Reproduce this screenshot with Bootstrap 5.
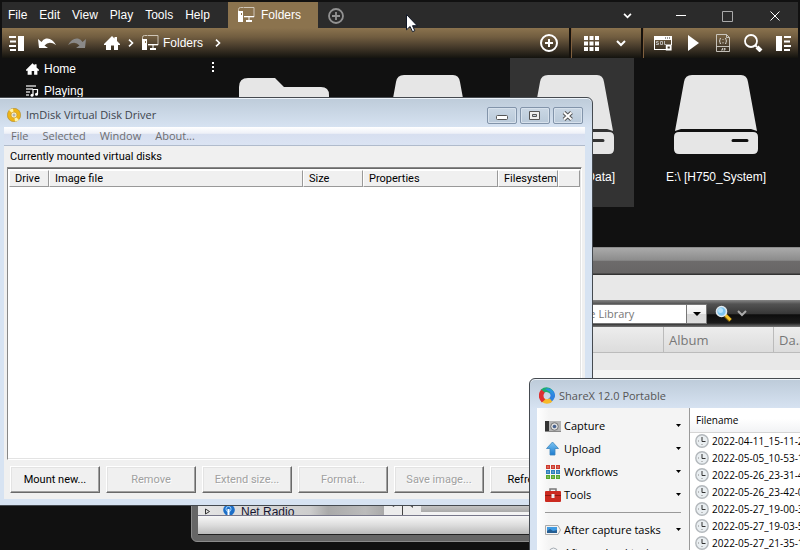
<!DOCTYPE html>
<html lang="en">
<head>
<meta charset="utf-8">
<meta name="viewport" content="width=device-width, initial-scale=1">
<title>Desktop</title>
<link href="https://cdn.jsdelivr.net/npm/bootstrap@5.3.0/dist/css/bootstrap.min.css" rel="stylesheet">
<style>
body{font:12px/16px "Liberation Sans",Arial,sans-serif;background:#111;color:#fff;height:100vh;overflow:hidden}
svg{display:block;flex:none}
a{color:inherit;text-decoration:none}
.btn{--bs-btn-padding-x:0;--bs-btn-padding-y:0;--bs-btn-border-width:0;--bs-btn-border-radius:0;font:inherit;color:inherit;line-height:16px}
.desktop{position:relative;height:100vh;overflow:hidden}
.win{position:absolute}
/* file manager */
.fm{inset:0;background:#111;padding:2px}
.fm-top{height:26px;background:#2b2b2b}
.fm-menu{width:226px;padding-left:6px;gap:12px}
.fm-tab{width:90px;background:#8b734e;padding-left:10px;gap:6px}
.fm-add{margin-left:10px;padding-top:2px}
.fm-tools{height:30px;background:linear-gradient(#8b734e,#715d40 30%,#433829 65%,#14130f)}
.cap{width:47px;height:26px;padding-top:2px}
.cap-first{margin-right:6px}
.tool{width:30px;height:30px}
.tool-add{margin-right:5px}
.tool-group{padding-left:5px;border-left:2px solid #15110c;box-shadow:inset 1px 0 #80603f}
.tool-view{padding-right:5px}
.fm-side{width:220px;padding-left:24px}
.fm-side a{height:22px;gap:5px}
.fm-more{margin-right:7px}
.tiles{gap:20px}
.tile{width:124px;height:149px;padding-top:17px}
.tile.sel{background:#333}
.tile-name{padding-top:14px}
/* music player */
.mp{left:191px;right:-8px;top:247px;bottom:8px;background:#666;border:1px solid #8c8c8c;border-radius:6px;padding:0 6px 6px;color:#777;overflow:hidden}
.mp-title{height:27px;margin:0 -6px;background:linear-gradient(#aaa,#8c8c8c 45%,#6d6b6b 50%,#676565 92%,#333 97%);}
.mp-strip{height:25px;background:#e8e8e8}
.mp-bar{height:27px;background:linear-gradient(#858585,#525252 15%,#383838 50%,#0d0d0d 55%,#1b1b1b 85%,#777);padding-left:259px}
.mp-search{width:250px;height:20px;background:#fff;border:1px solid #777}
.mp-search input{border:0;padding:0 0 0 83px;width:228px;background:#fff;color:#777;font:11px/16px "Open Sans",sans-serif;outline:0}
.mp-search input::placeholder{color:#777;opacity:1}
.mp-search .btn{width:20px;background:linear-gradient(#fcfcfc,#f0f0f0 50%,#d8d8d8 52%,#ddd);border-left:1px solid #777;height:18px}
.mp-opt{color:#aaa}
.mp-head{height:26px;background:linear-gradient(#ededed,#dcdcdc);border-bottom:1px solid #bbb;font:13px/26px "Open Sans",sans-serif;padding-left:465px}
.mp-head div{width:110px;border-left:1px solid #bbb;padding-left:5px}
.mp-body{background:linear-gradient(#e8e8e8 17px,#f4f4f4 17px);border-bottom:1px solid #77778a}
.mp-nav{width:186px;height:11px;background:linear-gradient(90deg,#e5e5e5,#cdcdcd 60%,#aaa 70%,#bbb 90%,#a9a9a9);color:#151530;font:12px/17px "Liberation Sans",sans-serif;padding-left:6px;gap:6px;overflow:hidden}
.mp-thumb{height:8px;margin-bottom:3px;background:linear-gradient(#ccc,#aaa)}
.mp-status{height:19px;background:linear-gradient(#f7f7f7,#ddd 50%,#bbb);border-bottom:1px solid #222}
/* disk driver */
.aero{background:linear-gradient(#bdcbd9,#d7e3f2 30px);border:1px solid #454a50;box-shadow:inset 0 1px #eef4fa;font-size:11px;color:#000}
.seg{font-family:"Open Sans",sans-serif;font-size:11px}
.im{left:-1px;right:207px;top:97px;padding:0 7px 6px 4px;border-radius:0 6px 0 0;font-family:Roboto,sans-serif}
.im-title{height:29px;padding:9px 2px 0 3px;gap:5px;color:#3d454d}
.im-title>svg{margin-top:1px}
.im-caps{gap:3px}
.im-caps .btn{width:30px;height:17px;border:1px solid #8294aa;border-radius:2px;background:linear-gradient(#cad7e4,#b9c9d9);box-shadow:inset 0 0 0 1px #d7e1ec}
.im-menu{height:19px;background:linear-gradient(#fff,#eef1f8 35%,#d7dff0 40%,#dbe4f3);border-bottom:1px solid #b0bbcc;color:#6d6d70;padding-left:7px;gap:14px}
.im-client{background:#f0f0f0;padding:3px 3px 6px}
.im-label{padding:0 3px 2px}
.im-list{border:1px solid;border-color:#888 #fff #fff #888;box-shadow:inset 0 1px #696969,inset -1px -1px #e3e3e3;background:#fff;height:293px;padding:1px;padding-top:2px}
.im-list table{width:100%;table-layout:fixed;border-collapse:separate;border-spacing:0}
.im-list th{height:17px;padding:0 0 0 5px;font-weight:400;line-height:14px;background:#f0f0f0;border:1px solid;border-color:#fff #999 #999 #fff;white-space:nowrap}
.c1{width:40px}.c3{width:60px}.c4{width:135px}.c5{width:60px}.c6{width:22px}
.im-btns{gap:6px;padding:6px 2px 0 3px}
.im-btns .btn{flex:1 1 0;height:27px;border:1px solid;border-color:#fff #696969 #696969 #fff;box-shadow:inset -1px -1px #a0a0a0,inset 1px 1px #e3e3e3;background:#f0f0f0;line-height:24px;white-space:nowrap}
.im-btns .btn:disabled{color:#a0a0a0;text-shadow:1px 1px #fff;opacity:1;border-color:#fff #696969 #696969 #fff}
/* capture tool */
.sx{left:529px;right:-8px;top:378px;bottom:-8px;border-radius:6px 0 0 0;padding-left:7px}
.sx-title{height:29px;padding:9px 0 0 2px;gap:4px;color:#555}
.sx-title>svg{margin-top:-2px}
.sx-side{width:153px;background:linear-gradient(90deg,#fff,#f4f4f4 12px);border-right:1px solid #999;padding:6px 8px 0}
.sx-side .btn{width:100%;height:23px;gap:3px}
.sx-side hr{margin:6px 0 5px;color:#999;opacity:1}
.sx-list{font-size:10px}
.sx-list th{height:24px;font-weight:400;padding:0 0 0 6px;background:linear-gradient(#fff,#fff 45%,#f2f3f5);border-bottom:1px solid #d5d5d5}
.sx-list td{height:17px;padding:0 0 0 5px;line-height:17px}
.sx-list td div{gap:3px}
.pointer{left:406px;top:14px}
</style>
</head>
<body>
<svg width="0" height="0" class="position-absolute">
<defs>
<linearGradient id="blue" x1="0" y1="0" x2="0" y2="1"><stop offset="0" stop-color="#7cc4f2"/><stop offset="1" stop-color="#1c7cd0"/></linearGradient>
<symbol id="drive" viewBox="0 0 84 80"><path d="M18 0h49q6 0 7 7l9 49-6-2H7l-6 2 9-49q1-7 8-7zM5 57h74q5 0 5 5v12q0 5-5 5H5q-5 0-5-5V62q0-5 5-5zm54 7a1.500 1.500 0 0 0 0 3h14a1.500 1.500 0 0 0 0-3z" fill="#e6e6e6"/></symbol>
<symbol id="pc" viewBox="0 0 17 16"><path d="M.5 4V2.500Q.5.500 2.500.500h3M6 .500h10v9.500H6" fill="none" stroke="#cfc6b8"/><path d="M6 9.500h10M11 10v3" fill="none" stroke="#fff"/><path d="M0 4h5v11H0zM8 13h6v2H8z" fill="#fff"/><path d="M3 6h1v2H3z" fill="#8b734e"/></symbol>
<symbol id="home" viewBox="0 0 16 14"><path d="M8 0l2.500 2.500V1H13v4l3 3v1h-2v5h-4V9.500H7V14H2V9H0V8z" fill="#fff"/></symbol>
<symbol id="chev" viewBox="0 0 10 7"><path d="M1 1l4 4 4-4" fill="none" stroke="currentColor" stroke-width="2"/></symbol>
<symbol id="next" viewBox="0 0 6 8"><path d="M1 0.700l3.500 3.300L1 7.300" fill="none" stroke="#fff" stroke-width="1.600"/></symbol>
<symbol id="clock" viewBox="0 0 14 14"><circle cx="7" cy="7" r="6.200" fill="#e9eef1" stroke="#b3b8bc" stroke-width="1.400"/><path d="M7 3v4.500h3.500" fill="none" stroke="#333"/><path d="M3 7h1M7 11v-1" stroke="#888"/></symbol>
<symbol id="caret" viewBox="0 0 5 3"><path d="M0 0h5L2.500 3z"/></symbol>
</defs>
</svg>
<main class="desktop">

<section class="win fm d-flex flex-column" aria-label="File manager">
  <header class="fm-top d-flex">
    <nav class="fm-menu d-flex align-items-center flex-shrink-0"><a href="#">File</a><a href="#">Edit</a><a href="#">View</a><a href="#">Play</a><a href="#">Tools</a><a href="#">Help</a></nav>
    <button class="btn fm-tab d-flex align-items-center flex-shrink-0"><svg width="17" height="16"><use href="#pc"/></svg>Folders</button>
    <button class="btn fm-add d-flex align-items-center" aria-label="New tab"><svg width="16" height="16"><circle cx="8" cy="8" r="7" fill="none" stroke="#929292" stroke-width="1.800"/><path d="M8 4v8M4 8h8" stroke="#929292" stroke-width="1.800"/></svg></button>
    <div class="d-flex ms-auto">
      <button class="btn cap cap-first d-flex align-items-center justify-content-center" aria-label="Tabs"><svg width="9" height="6"><use href="#chev"/></svg></button>
      <button class="btn cap d-flex align-items-center justify-content-center" aria-label="Minimize"><svg width="10" height="10"><path d="M0 4.500h10" stroke="#fff"/></svg></button>
      <button class="btn cap d-flex align-items-center justify-content-center" aria-label="Maximize"><svg width="11" height="11"><path d="M.5.5h10v10H.5z" fill="none" stroke="#aaa"/></svg></button>
      <button class="btn cap d-flex align-items-center justify-content-center" aria-label="Close"><svg width="10" height="10"><path d="M.5.5l9 9m0-9l-9 9" stroke="#fff"/></svg></button>
    </div>
  </header>
  <div class="fm-tools d-flex">
    <div class="d-flex align-items-center">
      <button class="btn tool d-flex align-items-center justify-content-center" aria-label="Left panel"><svg width="16" height="15"><path d="M9 0h6v15H9zM0 0h7v2H0zM1 4.500h6v2H1zM0 9h7v2H0zM1 13h6v2H1z" fill="#fff"/></svg></button>
      <button class="btn tool d-flex align-items-center justify-content-center" aria-label="Back"><svg width="18" height="11"><path d="M0 1l1 9h9L6.500 7.500Q11 2.500 18 7 14-.5 8 .500 5 1 3.500 4z" fill="#fff"/></svg></button>
      <button class="btn tool d-flex align-items-center justify-content-center" aria-label="Forward"><svg width="18" height="11"><path d="M18 1l-1 9H8l3.500-2.500Q7 2.500 0 7 4-.5 10 .500q3 .5 4.500 3.500z" fill="#8a8988"/></svg></button>
      <button class="btn d-flex ms-2 ps-1" aria-label="Home"><svg width="16" height="14"><use href="#home"/></svg></button>
      <span class="ms-2"><svg width="6" height="8"><use href="#next"/></svg></span>
      <a href="#" class="d-flex align-items-center ms-2 gap-1"><svg width="17" height="16"><use href="#pc"/></svg>Folders</a>
      <span class="ms-2 ps-1"><svg width="6" height="8"><use href="#next"/></svg></span>
    </div>
    <button class="btn tool tool-add d-flex align-items-center justify-content-center ms-auto" aria-label="Add"><svg width="18" height="18"><circle cx="9" cy="9" r="8" fill="none" stroke="#fff" stroke-width="2"/><path d="M9 5v8M5 9h8" stroke="#fff" stroke-width="2"/></svg></button>
    <div class="tool-group tool-view d-flex">
      <button class="btn tool d-flex align-items-center justify-content-center" aria-label="Thumbnails"><svg width="15" height="15"><path d="M0 0h4v4H0zM5.500 0h4v4h-4zM11 0h4v4h-4zM0 5.500h4v4H0zM5.500 5.500h4v4h-4zM11 5.500h4v4h-4zM0 11h4v4H0zM5.500 11h4v4h-4zM11 11h4v4h-4z" fill="#fff"/></svg></button>
      <button class="btn tool d-flex align-items-center justify-content-center" aria-label="View options"><svg width="10" height="7"><use href="#chev"/></svg></button>
    </div>
    <div class="tool-group d-flex">
      <button class="btn tool d-flex align-items-center justify-content-center" aria-label="SQL query"><svg width="18" height="15"><path d="M0 0h18v9h-1V4H1v9h11v1H0z" fill="#fff"/><path d="M11 2h1m1 0h1m1 0h1" stroke="#333"/><path d="M4.500 5.500H2.500v1.500H4.500v1.500H2M6.500 5.500h2v3h-2zM10.500 5v3.500H12" fill="none" stroke="#ccc" stroke-width=".8"/><path d="M12.700 9.500h4v4h-4z" fill="none" stroke="#fff" stroke-width="1.800"/></svg></button>
      <button class="btn tool d-flex align-items-center justify-content-center" aria-label="Play"><svg width="11" height="16"><path d="M0 0l11 8-11 8z" fill="#fff"/></svg></button>
      <button class="btn tool d-flex align-items-center justify-content-center" aria-label="Script"><svg width="14" height="18"><path d="M.5.500h10l3 3v14H.5zM.5 12.500h13M10.500.500v3h3M5 4.500H4v2l-1 .5 1 .5v2h1M9 4.500h1v2l1 .5-1 .5v2H9M7 5v1m0 2v1.500M6.500 14v2H5M9.500 14.500H8V15h1v1H7.500" fill="none" stroke="#d2cfc8" stroke-width=".9"/></svg></button>
      <button class="btn tool d-flex align-items-center justify-content-center" aria-label="Search"><svg width="19" height="18"><circle cx="7" cy="7" r="6" fill="none" stroke="#fff" stroke-width="1.800"/><path d="M11 11l2 2" stroke="#fff" stroke-width="2"/><path d="M13 13l4 4" stroke="#fff" stroke-width="4"/></svg></button>
      <button class="btn tool d-flex align-items-center justify-content-center" aria-label="Right panel"><svg width="15" height="15"><path d="M0 0h6v15H0zM8 0h7v2H8zM8 4.500h6v2H8zM8 9h7v2H8zM8 13h6v2H8z" fill="#fff"/></svg></button>
    </div>
  </div>
  <div class="d-flex">
    <aside class="fm-side d-flex flex-shrink-0 justify-content-between">
      <nav><a href="#" class="d-flex align-items-center"><svg width="13" height="12"><use href="#home"/></svg>Home</a>
      <a href="#" class="d-flex align-items-center"><svg width="13" height="12"><path d="M0 1h10M0 4h7M0 7h4M0 10h3" stroke="#ccc" stroke-width="1.300"/><path d="M7 10V4.500h4.500V9" fill="none" stroke="#fff" stroke-width="1.200"/><circle cx="6" cy="10.300" r="1.500" fill="#fff"/><circle cx="10.500" cy="9.300" r="1.500" fill="#fff"/></svg>Playing</a></nav>
      <button class="btn fm-more d-flex pt-1" aria-label="More"><svg width="3" height="12"><path d="M0 0h2v2H0zM0 4h2v2H0zM0 8h2v2H0z" fill="#fff"/></svg></button>
    </aside>
    <div class="tiles d-flex">
      <div class="tile"><svg class="mx-auto" width="90" height="80"><path d="M0 12Q0 3 9 3h27l9 9h37q8 0 8 8v50H0z" fill="#e6e6e6"/></svg></div>
      <div class="tile"><svg class="mx-auto" width="84" height="80"><use href="#drive"/></svg></div>
      <div class="tile sel text-center text-nowrap"><svg class="mx-auto" width="84" height="80"><use href="#drive"/></svg><div class="tile-name">D:\ [H750_Data]</div></div>
      <div class="tile text-center text-nowrap"><svg class="mx-auto" width="84" height="80"><use href="#drive"/></svg><div class="tile-name">E:\ [H750_System]</div></div>
    </div>
  </div>
</section>

<section class="win mp d-flex flex-column" aria-label="Music library">
  <div class="mp-title flex-shrink-0"></div>
  <div class="mp-strip flex-shrink-0"></div>
  <div class="mp-bar d-flex align-items-center flex-shrink-0">
    <div class="mp-search d-flex"><input type="text" placeholder="Search the Library" aria-label="Search the Library"><button class="btn d-flex align-items-center justify-content-center" aria-label="Search scope"><svg width="8" height="4"><path d="M0 0h8L4 4z"/></svg></button></div>
    <button class="btn ms-2" aria-label="Find"><svg width="18" height="18"><path d="M10.500 10.500l5 5" stroke="#8a6a10" stroke-width="4"/><path d="M10.500 10l5 5" stroke="#f7c52a" stroke-width="2.500"/><circle cx="6.500" cy="6.500" r="5" fill="#7cc4ef" stroke="#dfe8ee" stroke-width="1.600"/><circle cx="5.500" cy="5.500" r="2.500" fill="#b5e2fa"/></svg></button>
    <button class="btn mp-opt ms-1" aria-label="Find options"><svg width="10" height="7"><use href="#chev"/></svg></button>
  </div>
  <div class="mp-head d-flex flex-shrink-0"><div class="flex-shrink-0">Album</div><div class="flex-shrink-0">Da...</div></div>
  <div class="mp-body flex-grow-1 d-flex align-items-end">
    <div class="mp-nav d-flex"><svg width="8" height="11"><path d="M1.500 5l4 2.500-4 2.500z" fill="none" stroke="#333"/></svg><svg class="ms-1" width="13" height="11"><circle cx="7" cy="6" r="5.800" fill="#1d6fc8"/><circle cx="6.500" cy="5" r="2.600" fill="none" stroke="#9fd4ff"/><path d="M6.500 5v6" stroke="#fff" stroke-width="2"/></svg><span>Net Radio</span></div>
    <svg width="37" height="11"><path d="M0 0h37v11H0z" fill="#ececec"/><path d="M18.500 0v11" stroke="#444"/><path d="M6 0h7L9.500 3zM29 0v4l-4-3z" fill="#555"/></svg>
    <div class="mp-thumb flex-grow-1"></div>
  </div>
  <div class="mp-status flex-shrink-0"></div>
</section>

<section class="win aero im" aria-label="ImDisk Virtual Disk Driver">
  <header class="im-title d-flex">
    <svg width="14" height="14"><circle cx="7" cy="7" r="6.700" fill="#efb416" stroke="#a98a35" stroke-width=".6"/><path d="M7 7L2 2Q4 .5 6 .500zM7 7l5 5q-2 1.500-4 1.500z" fill="#fff2a8"/><circle cx="7" cy="7" r="3" fill="#fdf0c0" stroke="#c79a2b" stroke-width=".7"/><circle cx="7" cy="7" r="1.500" fill="#aab3bd"/></svg>
    <span class="seg">ImDisk Virtual Disk Driver</span>
    <div class="im-caps d-flex ms-auto">
      <button class="btn d-flex align-items-center justify-content-center" aria-label="Minimize"><svg width="12" height="8"><rect x=".5" y="3.500" width="11" height="4" rx="1" fill="#fff" stroke="#555"/></svg></button>
      <button class="btn d-flex align-items-center justify-content-center" aria-label="Maximize"><svg width="12" height="10"><path d="M.5.5h10v8H.5z" fill="#eee" stroke="#555"/><path d="M3.500 3.500h4v2h-4z" fill="#c4d0dd" stroke="#555"/></svg></button>
      <button class="btn d-flex align-items-center justify-content-center" aria-label="Close"><svg width="12" height="10"><path d="M2 1.500l7.500 7m0-7L2 8.500" stroke="#555" stroke-width="4"/><path d="M2 1.500l7.500 7m0-7L2 8.500" stroke="#fff" stroke-width="2"/></svg></button>
    </div>
  </header>
  <nav class="im-menu seg d-flex align-items-center"><a href="#">File</a><a href="#">Selected</a><a href="#">Window</a><a href="#">About...</a></nav>
  <div class="im-client">
    <div class="im-label">Currently mounted virtual disks</div>
    <div class="im-list"><table><colgroup><col class="c1"><col><col class="c3"><col class="c4"><col class="c5"><col class="c6"></colgroup>
      <thead><tr><th>Drive</th><th>Image file</th><th>Size</th><th>Properties</th><th>Filesystem</th><th></th></tr></thead></table></div>
    <div class="im-btns d-flex"><button class="btn">Mount new...</button><button class="btn" disabled>Remove</button><button class="btn" disabled>Extend size...</button><button class="btn" disabled>Format...</button><button class="btn" disabled>Save image...</button><button class="btn">Refresh list</button></div>
  </div>
</section>

<section class="win aero sx seg d-flex flex-column" aria-label="ShareX 12.0 Portable">
  <header class="sx-title d-flex flex-shrink-0">
    <svg width="16" height="18"><g fill="none" stroke-width="4.500" transform="translate(0 2)"><path d="M3 3.500Q8-.5 12.500 4" stroke="#1cae6d"/><path d="M12.500 4Q16 9 10 13" stroke="#2d80df"/><path d="M12 12Q8 15 4 12" stroke="#f6b92a"/><path d="M4.500 13Q0 8 4 3" stroke="#dc3030"/></g><path d="M6 3q5-2 8 2l1 5-4-4z" fill="#2a92e0"/></svg>
    <span>ShareX 12.0 Portable</span>
  </header>
  <div class="d-flex flex-grow-1 bg-white">
    <nav class="sx-side flex-shrink-0">
      <button class="btn d-flex align-items-center"><svg width="16" height="16"><path d="M0 3h16v11H0z" fill="#b5b5b5"/><path d="M0 3h4v11H0z" fill="#333"/><path d="M0 13h16v1H0z" fill="#888"/><circle cx="9.500" cy="8.500" r="3.800" fill="#ddd" stroke="#777"/><circle cx="9.500" cy="8.500" r="1.800" fill="#47618e"/></svg>Capture<svg class="ms-auto" width="5" height="3"><use href="#caret"/></svg></button>
      <button class="btn d-flex align-items-center"><svg width="16" height="16"><path d="M7.500 1l6 6.500H10V14H5V7.500H1.500z" fill="url(#blue)" stroke="#3c87be" stroke-width=".8"/></svg>Upload<svg class="ms-auto" width="5" height="3"><use href="#caret"/></svg></button>
      <button class="btn d-flex align-items-center"><svg width="16" height="16"><path d="M1 1h4v4H1zM6 1h4v4H6zM11 1h4v4h-4z" fill="#cf3a2c"/><path d="M1 6h4v4H1zM6 6h4v4H6zM11 6h4v4h-4z" fill="#2d80bd"/><path d="M1 11h4v4H1zM6 11h4v4H6zM11 11h4v4h-4z" fill="#59a82c"/><path d="M2.500 3h1m4 0h1m4 0h1M2.500 8h1m4 0h1m4 0h1M2.500 13h1m4 0h1m4 0h1" stroke="#eee"/></svg>Workflows<svg class="ms-auto" width="5" height="3"><use href="#caret"/></svg></button>
      <button class="btn d-flex align-items-center"><svg width="16" height="16"><path d="M5 5V2h6v3" fill="none" stroke="#777" stroke-width="1.500"/><rect y="4" width="16" height="11" rx="1" fill="#cb2a20"/><path d="M0 8.500h16" stroke="#8c1a12"/><path d="M6.500 7h3v4h-3z" fill="#eee"/></svg>Tools<svg class="ms-auto" width="5" height="3"><use href="#caret"/></svg></button>
      <hr>
      <button class="btn d-flex align-items-center text-nowrap"><svg width="16" height="16"><path d="M.5 3.500H13l2.500 4.500-2.500 4.500H.5z" fill="#f3f3f3" stroke="#a9a9a9"/><path d="M2 5h10v6H2z" fill="#3f9ae2"/><path d="M2 11V9l3-2 3 2 4-1v3z" fill="#245d92"/></svg>After capture tasks<svg class="ms-auto" width="5" height="3"><use href="#caret"/></svg></button>
      <button class="btn d-flex align-items-center text-nowrap"><svg width="16" height="16"><path d="M4 13q-3.500 0-3.500-3T4 7q1-4 4.500-4T13 7q2.500.5 2.500 3T13 13z" fill="#f3f5f7" stroke="#a5acb3"/></svg>After upload tasks<svg class="ms-auto" width="5" height="3"><use href="#caret"/></svg></button>
    </nav>
    <table class="sx-list w-100 align-self-start text-nowrap">
      <thead><tr><th>Filename</th></tr></thead>
      <tbody>
      <tr><td><div class="d-flex align-items-center"><svg width="14" height="14"><use href="#clock"/></svg>2022-04-11_15-11-28</div></td></tr>
      <tr><td><div class="d-flex align-items-center"><svg width="14" height="14"><use href="#clock"/></svg>2022-05-05_10-53-14</div></td></tr>
      <tr><td><div class="d-flex align-items-center"><svg width="14" height="14"><use href="#clock"/></svg>2022-05-26_23-31-40</div></td></tr>
      <tr><td><div class="d-flex align-items-center"><svg width="14" height="14"><use href="#clock"/></svg>2022-05-26_23-42-06</div></td></tr>
      <tr><td><div class="d-flex align-items-center"><svg width="14" height="14"><use href="#clock"/></svg>2022-05-27_19-00-33</div></td></tr>
      <tr><td><div class="d-flex align-items-center"><svg width="14" height="14"><use href="#clock"/></svg>2022-05-27_19-03-51</div></td></tr>
      <tr><td><div class="d-flex align-items-center"><svg width="14" height="14"><use href="#clock"/></svg>2022-05-27_21-35-17</div></td></tr>
      </tbody>
    </table>
  </div>
</section>

<svg class="win pointer" width="12" height="19" aria-hidden="true"><path d="M.5.500v15.300l3.600-3.300 2.400 5.200 2.300-1-2.300-5h4.700z" fill="#fff" stroke="#111827"/></svg>
</main>
<script src="https://cdn.jsdelivr.net/npm/bootstrap@5.3.0/dist/js/bootstrap.bundle.min.js"></script>
</body>
</html>
